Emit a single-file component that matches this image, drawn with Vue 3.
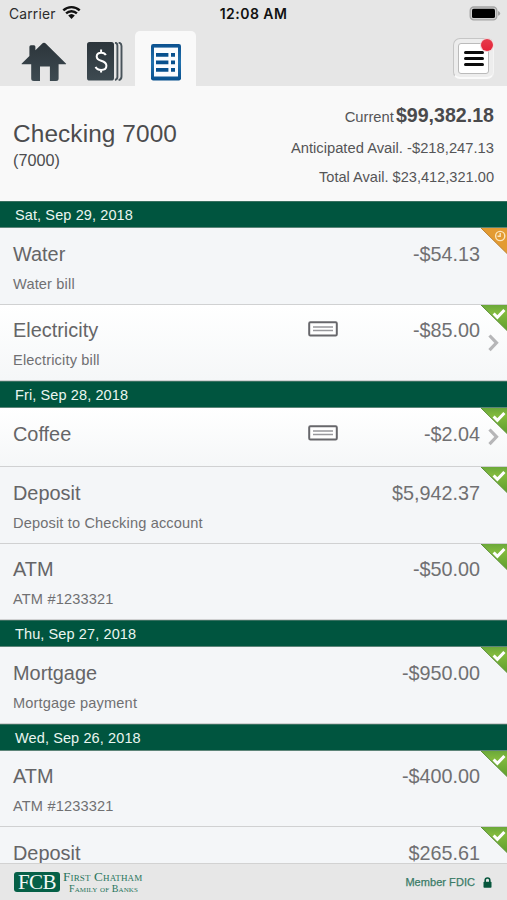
<script setup>
const groups = [
  {
    date: 'Sat, Sep 29, 2018',
    rows: [
      { name: 'Water', note: 'Water bill', amount: '-$54.13', pending: true },
      { name: 'Electricity', note: 'Electricity bill', amount: '-$85.00', check: true }
    ]
  },
  {
    date: 'Fri, Sep 28, 2018',
    rows: [
      { name: 'Coffee', note: '', amount: '-$2.04', check: true },
      { name: 'Deposit', note: 'Deposit to Checking account', amount: '$5,942.37' },
      { name: 'ATM', note: 'ATM #1233321', amount: '-$50.00' }
    ]
  },
  {
    date: 'Thu, Sep 27, 2018',
    rows: [{ name: 'Mortgage', note: 'Mortgage payment', amount: '-$950.00' }]
  },
  {
    date: 'Wed, Sep 26, 2018',
    rows: [
      { name: 'ATM', note: 'ATM #1233321', amount: '-$400.00' },
      { name: 'Deposit', note: '', amount: '$265.61' }
    ]
  }
]
</script>

<template>
  <div class="screen">
    <header class="top">
      <div class="status">
        <div class="carrier">
          <span>Carrier</span>
          <svg width="19" height="15" viewBox="0 0 19 15">
            <path d="M1.3 5.4a11.8 11.8 0 0 1 16.4 0M4.1 8.4a7.8 7.8 0 0 1 10.8 0" fill="none" stroke="#111" stroke-width="2.4" />
            <path d="M6.2 10.6a4.8 4.8 0 0 1 6.6 0L9.5 14z" fill="#111" />
          </svg>
        </div>
        <b class="time">12:08 AM</b>
        <svg class="battery" width="32" height="15" viewBox="0 0 32 15">
          <rect x="1.2" y="1" width="26.6" height="12.8" rx="3.6" fill="#d0d0d0" stroke="#a4a4a4" stroke-width="1.3" />
          <rect x="3" y="2.8" width="23" height="9.2" rx="1.6" fill="#000" />
          <path d="M29 5q2.2.7 2.2 2.4T29 9.8z" fill="#a4a4a4" />
        </svg>
      </div>
      <nav class="tabs">
        <svg class="home" width="46" height="40" viewBox="0 0 46 40">
          <defs>
            <linearGradient id="slate" x1="0" y1="0" x2="0" y2="1">
              <stop offset="0" stop-color="#2c353b" /><stop offset="1" stop-color="#3d4a51" />
            </linearGradient>
          </defs>
          <path d="M.8 21.6 8.4 14V4.8q0-1.5 1.5-1.5H13q1.4 0 1.4 1.5v3.5l6.4-6.4q2.2-2.1 4.4 0L44.9 21.4q.8.9-.5.9h-6.8v14.2q0 2.5-2.5 2.5h-6.2V24.6H19V39h-6.2q-2.6 0-2.6-2.5V22.3H1.3q-1.2 0-.5-.7z" fill="url(#slate)" />
        </svg>
        <svg class="ledger" width="36" height="39" viewBox="0 0 36 39">
          <rect x="0" y="0" width="27" height="38.5" rx="2.6" fill="url(#slate)" />
          <path d="M28 .6q2.4.4 2.4 3v31.5q0 2.4-2.4 2.9M31.6.6q2.9.4 2.9 3.4v30.5q0 3.2-2.9 3.6" fill="none" stroke="#48535a" stroke-width="1.9" />
          <path d="M18.8 13.1q-1.1-2.4-4.5-2.4-4.6 0-4.6 3.7 0 2.9 4.5 4.3 5.2 1.5 5.2 5 0 4.2-5.2 4.2-4.5 0-5.6-3M14.1 7.6v3.6M14.1 27v3.6" fill="none" stroke="#fff" stroke-width="2" />
        </svg>
        <div class="active">
          <svg width="30" height="37" viewBox="0 0 30 37">
            <defs>
              <linearGradient id="blue" x1="0" y1="0" x2="0" y2="1">
                <stop offset="0" stop-color="#0b518f" /><stop offset=".5" stop-color="#2372ae" /><stop offset="1" stop-color="#07508e" />
              </linearGradient>
            </defs>
            <rect x="0" y="0" width="30" height="36.5" rx="2.2" fill="url(#blue)" />
            <rect x="3" y="3.6" width="24" height="28.9" fill="#fafcff" />
            <path d="M5 10.8h12.4M5 18.3h12.4M5 25.8h12.4M20 10.8h4M20 18.3h4M20 25.8h4" stroke="#07508e" stroke-width="3.8" />
          </svg>
        </div>
        <div class="menu">
          <div class="menu-face"><i></i><i></i><i></i></div>
          <span class="badge"></span>
        </div>
      </nav>
    </header>

    <section class="account">
      <div>
        <div class="title">Checking 7000</div>
        <div class="number">(7000)</div>
      </div>
      <div class="balances">
        <div class="current">Current <b>$99,382.18</b></div>
        <div class="anticipated">Anticipated Avail. -$218,247.13</div>
        <div class="total">Total Avail. $23,412,321.00</div>
      </div>
    </section>

    <main class="list">
      <template v-for="group in groups" :key="group.date">
        <div class="date">{{ group.date }}</div>
        <div v-for="row in group.rows" :key="row.name" class="row" :class="{ linked: row.check, short: !row.note }">
          <div class="label">
            <div class="name">{{ row.name }}</div>
            <div v-if="row.note" class="note">{{ row.note }}</div>
          </div>
          <svg v-if="row.check" class="cheque" width="30" height="16" viewBox="0 0 30 16">
            <rect x="1.2" y="1.2" width="27.6" height="13.3" rx="1.2" fill="#fff" stroke="#67676b" stroke-width="2" />
            <path d="M5 6h20M5 9.5h20" stroke="#98989c" stroke-width="1.3" />
          </svg>
          <div class="amount">{{ row.amount }}</div>
          <svg v-if="row.check" class="chevron" width="11" height="18" viewBox="0 0 11 18">
            <path d="m1.5 1.5 7 7.3-7 7.3" fill="none" stroke="#b6b6b8" stroke-width="3.2" />
          </svg>
          <svg class="corner" width="27" height="27" viewBox="0 0 27 27">
            <defs>
              <linearGradient id="green" x1="0" y1="0" x2="0" y2="1">
                <stop offset="0" stop-color="#6ba83a" /><stop offset=".3" stop-color="#82ba3e" /><stop offset="1" stop-color="#5f9e2e" />
              </linearGradient>
            </defs>
            <path d="M1 0H27v25.5z" :fill="row.pending ? '#e39b32' : 'url(#green)'" />
            <path d="M1 0 27 25.5" :stroke="row.pending ? '#b98032' : '#5c903a'" stroke-width="1" />
            <g v-if="row.pending" fill="none" stroke="#fbe5bd" stroke-width="1.4">
              <circle cx="20.2" cy="8" r="4.6" /><path d="M20.2 5v3.3h-2.7" />
            </g>
            <path v-else d="m13.6 8.5 3.8 3.9 7-7.4" fill="none" stroke="#fff" stroke-width="3" />
          </svg>
        </div>
      </template>
    </main>

    <footer class="footer">
      <div class="mark">FCB</div>
      <div class="bank">
        <div class="line1">First Chatham</div>
        <div class="line2">Family of Banks</div>
      </div>
      <div class="member">Member FDIC</div>
      <svg class="lock" width="9" height="11" viewBox="0 0 9 11">
        <path d="M2.2 5V3.3a2.3 2.3 0 0 1 4.6 0V5" fill="none" stroke="#07563c" stroke-width="1.6" />
        <rect x=".5" y="4.7" width="8" height="6" rx=".8" fill="#07563c" />
      </svg>
    </footer>
  </div>
</template>

<style>
body { margin: 0; overflow: hidden; }
</style>

<style scoped>
.screen { width: 507px; height: 900px; overflow: hidden; display: flex; flex-direction: column; background: #f9f9f9; color: #4c4c4e; font-family: "Liberation Sans", Arial, sans-serif; }
.screen div, .screen b { white-space: nowrap; }
svg { display: block; flex: none; }
.top { height: 86px; flex: none; background: #e6e6e6; display: flex; flex-direction: column; }
.status { height: 31px; display: grid; grid-template-columns: 1fr auto 1fr; align-items: start; font-family: Inter, sans-serif; color: #111; }
.carrier { display: flex; gap: 6px; padding: 5px 0 0 9px; font-size: 13.8px; line-height: 18px; letter-spacing: .2px; color: #2c2c2c; }
.time { font-size: 14px; line-height: 18px; padding-top: 5px; font-weight: 600; letter-spacing: .45px; }
.battery { justify-self: end; margin: 6px 6px 0 0; }
.tabs { height: 55px; display: flex; align-items: flex-start; }
.home { margin: 11px 0 0 21px; }
.ledger { margin: 11px 0 0 20px; }
.active { margin-left: 12px; width: 61px; height: 55px; box-sizing: border-box; padding: 13px 0 0 16px; border-radius: 5px 5px 0 0; background: #f9f9f9; }
.menu { position: relative; margin: 7px 13px 0 auto; width: 41px; height: 41px; box-sizing: border-box; padding: 4px; border-radius: 7px; background: #ededed; border: 1px solid #c6c6c6; border-right-color: #f4f4f4; border-bottom: 2px solid #fafafa; }
.menu-face { width: 31px; height: 31px; box-sizing: border-box; border: 1px solid #bbb; border-radius: 3px; background: #fff; display: flex; flex-direction: column; align-items: center; justify-content: center; gap: 3px; }
.menu-face i { width: 20px; height: 3px; flex: none; border-radius: 1.5px; background: #0c0c0c; }
.badge { position: absolute; right: 0; top: 0; width: 12px; height: 12px; border-radius: 50%; background: linear-gradient(#e63b4b, #e42237); box-shadow: 0 0 0 1px #f2d5d7; }
.account { height: 115px; flex: none; display: flex; justify-content: space-between; padding: 0 13px; }
.title { margin-top: 33px; font-size: 24.4px; line-height: 30px; letter-spacing: .1px; }
.number { margin-top: 1px; font-size: 16.2px; line-height: 20px; }
.balances { text-align: right; font-size: 14.75px; color: #555557; }
.current { margin-top: 17px; line-height: 24px; }
.current b { font-size: 19.6px; color: #4a4a4c; margin-left: -2px; }
.anticipated { margin-top: 7px; line-height: 24px; }
.total { margin-top: 5px; line-height: 24px; font-size: 14.6px; }
.list { flex: 1; min-height: 0; overflow: hidden; }
.date { height: 27px; box-sizing: border-box; padding: 0 0 0 15px; border-top: 1px solid #386f5f; border-bottom: 1px solid #5d8579; background: #00553f; color: #eaf5f0; font-size: 14.5px; line-height: 27px; letter-spacing: .11px; }
.row { position: relative; height: 76.5px; box-sizing: border-box; display: flex; align-items: flex-start; padding: 11.9px 27px 0 13px; border-bottom: 1px solid #d0d1d2; background: #f4f6f8; }
.row.linked { background: linear-gradient(#fff, #f5f7f8); }
.row.short { height: 59px; }
.label { flex: 1; }
.name { font-size: 19.9px; line-height: 28px; color: #656567; }
.note { margin-top: 6px; font-size: 14.6px; line-height: 20px; letter-spacing: .15px; color: #707072; }
.cheque { margin: 5px 0 0; }
.amount { width: 142px; text-align: right; font-size: 19.8px; line-height: 28px; color: #707072; }
.chevron { position: absolute; right: 8px; top: 29px; }
.short .chevron { top: 20px; }
.corner { position: absolute; right: 0; top: .4px; }
.footer { height: 37px; flex: none; box-sizing: border-box; border-top: 1px solid #d2d2d2; background: #e7e7e7; color: #397b66; display: flex; align-items: flex-start; padding: 0 15px 0 14px; }
.mark { width: 46px; height: 20px; margin-top: 8px; border-radius: 3px; background: #056047; color: #f1f8f5; font: 21px/20px "Liberation Serif", serif; text-align: center; letter-spacing: -.5px; }
.bank { width: 90px; margin: 6px 0 0 3px; font-family: "Liberation Serif", serif; font-variant-caps: small-caps; color: #28755c; }
.line1 { font-size: 13.2px; line-height: 14px; letter-spacing: .15px; }
.line2 { padding-left: 6px; font-size: 10px; line-height: 10px; letter-spacing: .1px; }
.member { margin: 10px 8px 0 auto; font-size: 11px; line-height: 16px; letter-spacing: .05px; -webkit-text-stroke: .25px #397b66; }
.lock { margin-top: 13px; }
</style>
